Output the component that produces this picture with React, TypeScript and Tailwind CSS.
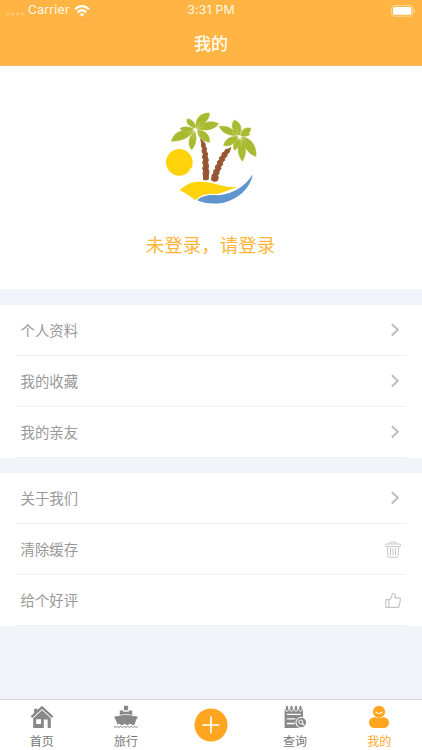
import React from "react";

interface MenuItem {
  label: string;
  icon: React.ReactNode;
}

const Chevron = () => (
  <svg width="10" height="14" viewBox="0 0 10 14" fill="none" className="mr-[6px]">
    <path d="M1.8 1.2 7.8 6.8 1.8 12.4" stroke="#bdbdbd" strokeWidth="2" />
  </svg>
);

const TrashIcon = () => (
  <svg width="16" height="17" viewBox="0 0 16 17" fill="none" stroke="#c6c6ca" className="mr-[5px]">
    <path d="M5.2 3V1.7Q5.2 1 6 1h4q.8 0 .8.7V3" />
    <rect x=".6" y="3" width="14.8" height="2.6" rx=".8" />
    <path d="M2.3 5.7 2.9 15q.1 1.3 1.3 1.3h7.6q1.2 0 1.3-1.3l.6-9.3" />
    <path d="M5.5 7.2v7M8 7.2v7M10.5 7.2v7" />
  </svg>
);

const ThumbIcon = () => (
  <svg width="16" height="17" viewBox="0 0 16 17" fill="none" stroke="#c6c6ca" strokeWidth="1.2" strokeLinejoin="round" className="mr-[5px]">
    <path d="M.8 7.6h3v7.7h-3z" />
    <path d="M3.8 7.9C6 6.9 7 5 7.1 2.8 7.1.6 10.1.7 10.2 3.2c0 1-.2 1.9-.5 2.6h4.2c1.1 0 1.6.8 1.4 1.8l-1.1 6.4c-.2.9-.8 1.3-1.6 1.3H3.8" />
  </svg>
);

const accountItems: MenuItem[] = [
  { label: "个人资料", icon: <Chevron /> },
  { label: "我的收藏", icon: <Chevron /> },
  { label: "我的亲友", icon: <Chevron /> },
];

const appItems: MenuItem[] = [
  { label: "关于我们", icon: <Chevron /> },
  { label: "清除缓存", icon: <TrashIcon /> },
  { label: "给个好评", icon: <ThumbIcon /> },
];

const MenuGroup: React.FC<{ items: MenuItem[] }> = ({ items }) => (
  <ul className="bg-white px-4">
    {items.map((item) => (
      <li
        key={item.label}
        className="flex h-[51px] items-center justify-between border-b border-[#f0f0f2] pl-[5px] text-[14.4px] text-[#999]"
      >
        <span className="-ml-[0.5px]">{item.label}</span>
        {item.icon}
      </li>
    ))}
  </ul>
);

const StatusBar = () => (
  <div className="grid h-[21px] grid-cols-3 items-center px-[6px] font-['Inter'] text-[12.3px] text-[#fffbe9]">
    <div className="flex items-center">
      <svg width="18" height="4" viewBox="0 0 18 4" fill="#ffca74" className="mt-[7px] mr-[4px]">
        <circle cx="2" cy="2" r="1.6" />
        <circle cx="6.7" cy="2" r="1.6" />
        <circle cx="11.4" cy="2" r="1.6" />
        <circle cx="16.1" cy="2" r="1.6" />
      </svg>
      <span className="tracking-[0.2px]">Carrier</span>
      <svg width="16" height="12" viewBox="0 0 16 12" fill="none" stroke="#fffdf4" strokeWidth="2.3" className="ml-[4px]">
        <path d="M1 4.3Q8-2.1 15 4.3" />
        <path d="M3.6 7.3Q8 3.3 12.4 7.3" />
        <path d="M8 11.7 5.6 9.2Q8 7.2 10.4 9.2Z" fill="#fffdf4" stroke="none" />
      </svg>
    </div>
    <span className="text-center tracking-[0.2px]">3:31 PM</span>
    <svg width="25" height="12" viewBox="0 0 25 12" className="justify-self-end">
      <rect x=".6" y=".6" width="21.2" height="10.6" rx="2.8" fill="none" stroke="#ffd998" />
      <rect x="2" y="2" width="18.4" height="7.8" rx="1.5" fill="#fff" />
      <path d="M23 4v4q1.4-.6 1.4-2T23 4z" fill="#ffd998" />
    </svg>
  </div>
);

const Logo = () => (
  <svg width="112" height="112" viewBox="0 0 336 336">
    {/* Sun */}
    <circle cx="73" cy="187" r="40" fill="#ffd20a" />
    <path d="M95 221Q106 215 107 204" fill="none" stroke="#fff" strokeWidth="2" />
    {/* Trunks */}
    <g fill="#965632" stroke="#965632" strokeWidth="3" strokeLinejoin="round">
      <path d="M137 117 146 126 151 132 150 138 155 146 153 152 158 162 156 168 160 180 158 187 161 199 159 205 162 218 160 225 160 238Q153 242 145 238L146 228 144 222 146 213 143 206 146 196 143 189 146 179 142 172 145 162 141 154 143 145 139 138 140 130Z" />
      <path d="M227 143 222 158 216 163 216 169 209 174 209 181 202 187 203 194 197 200 198 207 192 213 192 220 188 226 190 233 187 242Q177 247 169 240L171 231 171 225 177 219 176 212 182 206 181 198 188 192 187 185 194 179 193 173 201 167 201 160 209 155 211 149 220 147Z" />
    </g>
    {/* Leaves */}
    <g fill="#a8ba30" stroke="#a8ba30" strokeWidth="1.6" strokeLinejoin="round">
      <path d="M123 85C120 58 134 38 163 39C164 61 148 70 123 85Z" />
      <path d="M118 84C97 76 92 65 98 56C114 60 121 70 121 83Z" />
      <path d="M126 87C145 65 167 60 191 71C178 89 153 94 126 87Z" />
      <path d="M116 87C98 78 82 79 75 87C86 95 102 94 116 87Z" />
      <path d="M116 91C82 86 56 96 49 124C79 124 105 113 116 91Z" />
      <path d="M119 94C97 113 99 137 110 149C124 134 126 113 119 94Z" />
      <path d="M127 91C151 90 165 106 164 127C142 124 129 113 127 91Z" />
      <path d="M250 105C229 90 227 73 238 60C258 68 262 85 254 105Z" />
      <path d="M247 106C225 109 199 99 193 79C217 76 236 86 247 106Z" />
      <path d="M257 107C258 89 270 80 287 85C289 97 275 105 257 107Z" />
      <path d="M259 108C267 97 279 95 285 102C280 109 270 110 259 108Z" />
      <path d="M249 110C227 106 209 118 206 137C228 140 242 128 249 110Z" />
      <path d="M251 116C236 124 232 139 238 150C250 146 253 132 251 116Z" />
      <path d="M255 115C245 141 248 165 262 184C276 161 275 136 255 115Z" />
      <path d="M260 111C288 113 305 137 303 169C279 162 266 140 260 111Z" />
    </g>
    {/* Leaf veins near the crowns */}
    <g fill="none" stroke="#e9eecb" strokeWidth="1.2">
      <path d="M124 84 136 67M129 86 148 79M126 93 138 103M115 91 98 98M117 99 114 115" />
      <path d="M251 100 246 88M245 104 230 96M257 118 259 138M263 114 274 127" />
    </g>
    {/* Beach */}
    <path d="M74 272C98 246 124 242 165 248C194 253 216 265 251 260C221 268 203 280 181 282C149 280 137 286 122 300C108 292 95 278 74 272Z" fill="#ffd20a" />
    <path d="M126 301C144 284 165 283 193 286C235 281 270 260 294 223C284 268 249 298 206 308C173 314 147 310 126 301Z" fill="#5f94cf" />
  </svg>
);

const HomeIcon = () => (
  <svg width="24" height="24" viewBox="0 0 24 24" fill="#888">
    <path d="M12 .8 23.3 11.2 21.8 12.9 12 3.9 2.2 12.9.7 11.2 4.1 8V3.7h3.3V5z" />
    <path fillRule="evenodd" d="M12 5.2 20.8 13.2V23H17.7V14.5H13.8V23H3.2V13.2ZM6.2 14.3V19H11V14.3Z" />
  </svg>
);

const ShipIcon = () => (
  <svg width="26" height="24" viewBox="0 0 26 24" fill="#888">
    <path d="M10.9.8h4.2v4.4h-4.2zM6.8 5.6h3.4v1.2h5.6V5.6h3.4V10L13 8.7 6.8 10z" />
    <path d="M1 11.7 13 9.5 25 11.7Q22.7 15 21.5 19.5q-1.5 1.4-3 0-1.4-1.4-2.8 0-1.4 1.4-2.7 0-1.3-1.4-2.7 0-1.4 1.4-2.8 0-1.5-1.4-3 0Q3.3 15 1 11.7Z" />
    <path d="M1 21.4q1.7 2.2 3.4 0 1.7 2.2 3.4 0 1.7 2.2 3.5 0 1.7 2.2 3.4 0 1.7 2.2 3.4 0 1.7 2.2 3.4 0 1.7 2.2 3.4 0" fill="none" stroke="#888" />
  </svg>
);

const QueryIcon = () => (
  <svg width="24" height="24" viewBox="0 0 24 24">
    <path d="M1.6 4.2H20V23H1.6z" fill="#888" />
    <g fill="#888" stroke="#fff" strokeWidth=".8">
      <rect x="2.4" y=".5" width="3.2" height="5.8" rx="1.6" />
      <rect x="6.9" y=".5" width="3.2" height="5.8" rx="1.6" />
      <rect x="11.4" y=".5" width="3.2" height="5.8" rx="1.6" />
      <rect x="15.9" y=".5" width="3.2" height="5.8" rx="1.6" />
    </g>
    <path d="M3.8 9.4h14M3.8 13.9h8.6M3.8 18.5h7.9" stroke="#fff" strokeWidth="1.4" />
    <circle cx="18.3" cy="17.5" r="5.8" fill="#fff" />
    <circle cx="18.3" cy="17.5" r="4.8" fill="#888" />
    <circle cx="17.8" cy="17" r="2" fill="none" stroke="#fff" />
    <path d="m19.3 18.5 2.2 2" stroke="#fff" strokeWidth="1.2" />
  </svg>
);

const MineIcon = () => (
  <svg width="24" height="24" viewBox="0 0 24 24">
    <rect x="2" y="12.2" width="20" height="10.8" rx="5.2" fill="#ffa51f" />
    <circle cx="12" cy="6.7" r="6.6" fill="#fff" />
    <circle cx="12" cy="6.8" r="6.1" fill="#ffa51f" />
    <path d="M8.6 6.9q3.4 3.2 6.8 0" fill="none" stroke="#fff" strokeWidth="1.1" />
  </svg>
);

const Tab: React.FC<{ label: string; icon: React.ReactNode; active?: boolean }> = ({
  label,
  icon,
  active,
}) => (
  <div
    className={`flex flex-col items-center pt-[5px] pr-px text-[12px] leading-[18px] ${
      active ? "text-[#ffa72b]" : "text-[#777]"
    }`}
  >
    {icon}
    <span className="mt-[3px]">{label}</span>
  </div>
);

const App: React.FC = () => {
  return (
    <div className="flex h-[750px] w-[422px] flex-col overflow-hidden bg-[#f2f3f8] font-['Noto_Sans_CJK_SC',sans-serif]">
      <header className="h-[66px] shrink-0 border-b border-[#f2b760] bg-[#ffb443]">
        <StatusBar />
        <h1 className="text-center text-[17px] leading-[44px] font-medium text-[#fffdf5]">我的</h1>
      </header>

      {/* Profile */}
      <section className="flex h-[223px] shrink-0 flex-col items-center bg-white pt-[34px]">
        <Logo />
        <p className="mt-[18px] pr-px text-[18.5px] leading-[28px] text-[#ffb537]">未登录，请登录</p>
      </section>

      {/* Menus */}
      <main className="flex flex-1 flex-col gap-[15px] pt-4">
        <MenuGroup items={accountItems} />
        <MenuGroup items={appItems} />
      </main>

      {/* Bottom tabs */}
      <nav className="grid h-[51px] shrink-0 grid-cols-5 border-t border-[#d5d6da] bg-white">
        <Tab label="首页" icon={<HomeIcon />} />
        <Tab label="旅行" icon={<ShipIcon />} />
        <div className="flex justify-center pt-[8px]">
          <svg width="34" height="34" viewBox="0 0 34 34">
            <circle cx="17" cy="17" r="16.5" fill="#ffa51f" />
            <path d="M17 8.5v17M8.5 17h17" stroke="#fff" strokeWidth="1.7" />
          </svg>
        </div>
        <Tab label="查询" icon={<QueryIcon />} />
        <Tab label="我的" icon={<MineIcon />} active />
      </nav>
    </div>
  );
};

export default App;
